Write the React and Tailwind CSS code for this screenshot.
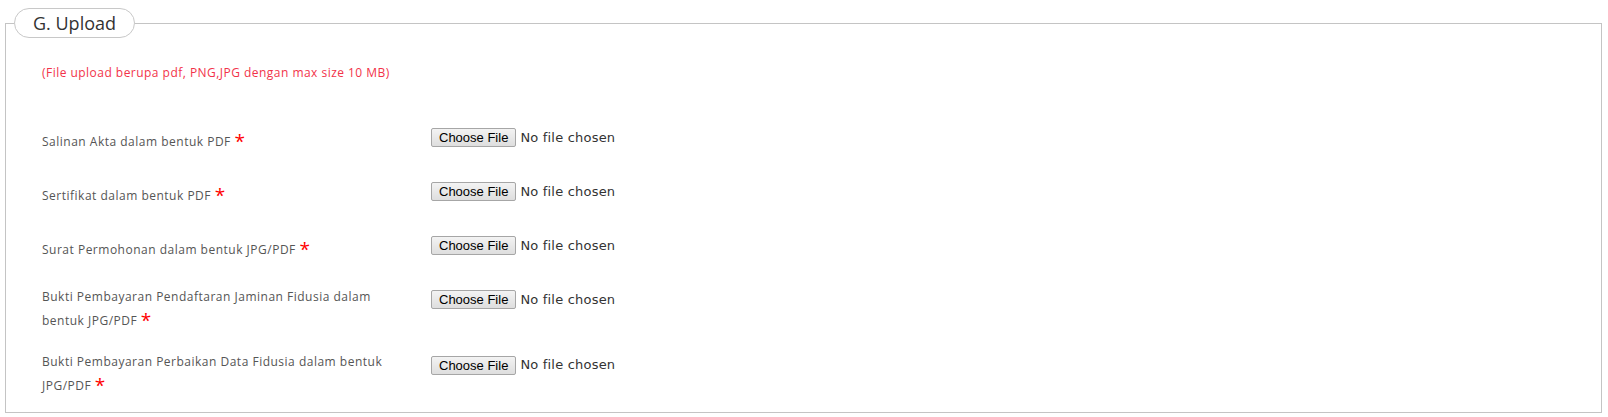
import React from "react";

const fields = [
  "Salinan Akta dalam bentuk PDF",
  "Sertifikat dalam bentuk PDF",
  "Surat Permohonan dalam bentuk JPG/PDF",
  "Bukti Pembayaran Pendaftaran Jaminan Fidusia dalam bentuk JPG/PDF",
  "Bukti Pembayaran Perbaikan Data Fidusia dalam bentuk JPG/PDF",
];

const FileField = ({ label }) => {
  return (
    <div className="flex items-start min-h-[33px]">
      <label className="w-[389px] shrink-0 pr-[15px] text-[12px] leading-[1.42857] tracking-[0.5px] text-[#555]">
        {label}{" "}
        <span className="relative top-[2px] text-[19px] leading-[1.42857] tracking-normal text-[#ff0000]">*</span>
      </label>
      <div className="flex items-center mt-[2px]">
        <button
          type="button"
          className="h-[19px] px-[7px] border border-[#a6a6a6] rounded-[2px] bg-gradient-to-b from-[#f3f3f3] to-[#dedede] text-[13px] leading-none text-black font-['Liberation_Sans',Arial,sans-serif]"
        >
          Choose File
        </button>
        <span className="ml-[4px] text-[13px] tracking-[0.2px] text-[#333] font-['DejaVu_Sans',Verdana,sans-serif]">
          No file chosen
        </span>
      </div>
    </div>
  );
};

const App = () => {
  return (
    <div className="min-h-[417px] bg-white pt-[8px] font-['Open_Sans',sans-serif]">
      <fieldset className="ml-[5px] mr-[6px] h-[405px] border border-[#c4c4c4]">
        <legend className="ml-[8px] h-[30px] px-[18px] border border-[#c8c8c8] rounded-full bg-white text-[18px] leading-[28px] text-[#333]">
          G. Upload
        </legend>
        <div className="pl-[36px] pt-[26px]">
          <p className="text-[12px] leading-[17px] tracking-[0.47px] text-[#f2334a]">
            (File upload berupa pdf, PNG,JPG dengan max size 10 MB)
          </p>
          <div className="mt-[45px] flex flex-col gap-[21px]">
            {fields.map((f, i) => (
              <FileField key={i} label={f} />
            ))}
          </div>
        </div>
      </fieldset>
    </div>
  );
};

export default App;
